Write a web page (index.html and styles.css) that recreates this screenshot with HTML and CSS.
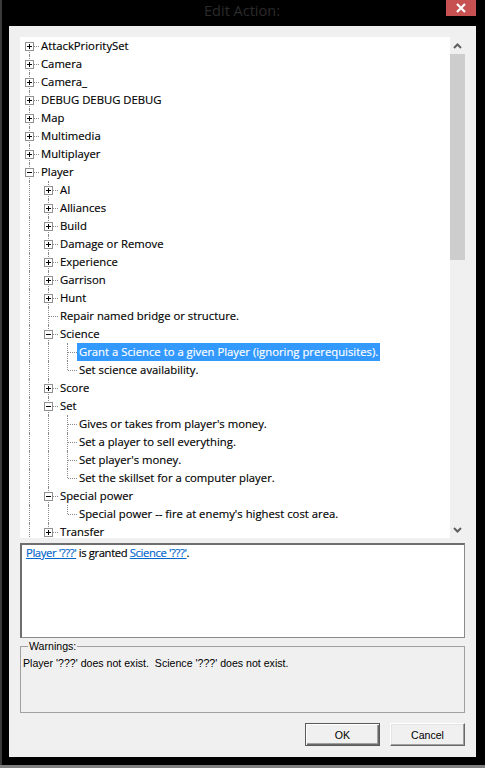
FILE: index.html
```html
<!DOCTYPE html>
<html>
<head>
<meta charset="utf-8">
<title>Edit Action</title>
<link rel="stylesheet" href="styles.css">
</head>
<body>
<div class="screen">
  <div class="edge"></div>
  <div class="window">
    <div class="titlebar">
      <div class="title">Edit Action:</div>
      <div class="close">
        <svg width="12" height="10" viewBox="0 0 12 10"><path d="M2 1 L10 9 M10 1 L2 9" stroke="#fff" stroke-width="2.2" fill="none"/></svg>
      </div>
    </div>
    <div class="client">
      <div class="tree">
        <div class="list">
          <div class="row"><span class="c first more"><span class="box plus"></span></span><span class="label">AttackPrioritySet</span></div>
          <div class="row"><span class="c more"><span class="box plus"></span></span><span class="label">Camera</span></div>
          <div class="row"><span class="c more"><span class="box plus"></span></span><span class="label">Camera_</span></div>
          <div class="row"><span class="c more"><span class="box plus"></span></span><span class="label">DEBUG DEBUG DEBUG</span></div>
          <div class="row"><span class="c more"><span class="box plus"></span></span><span class="label">Map</span></div>
          <div class="row"><span class="c more"><span class="box plus"></span></span><span class="label">Multimedia</span></div>
          <div class="row"><span class="c more"><span class="box plus"></span></span><span class="label">Multiplayer</span></div>
          <div class="row"><span class="c more"><span class="box minus"></span></span><span class="label">Player</span></div>
          <div class="row"><span class="g"></span><span class="c more"><span class="box plus"></span></span><span class="label">AI</span></div>
          <div class="row"><span class="g"></span><span class="c more"><span class="box plus"></span></span><span class="label">Alliances</span></div>
          <div class="row"><span class="g"></span><span class="c more"><span class="box plus"></span></span><span class="label">Build</span></div>
          <div class="row"><span class="g"></span><span class="c more"><span class="box plus"></span></span><span class="label">Damage or Remove</span></div>
          <div class="row"><span class="g"></span><span class="c more"><span class="box plus"></span></span><span class="label">Experience</span></div>
          <div class="row"><span class="g"></span><span class="c more"><span class="box plus"></span></span><span class="label">Garrison</span></div>
          <div class="row"><span class="g"></span><span class="c more"><span class="box plus"></span></span><span class="label">Hunt</span></div>
          <div class="row"><span class="g"></span><span class="c more"></span><span class="label">Repair named bridge or structure.</span></div>
          <div class="row"><span class="g"></span><span class="c more"><span class="box minus"></span></span><span class="label">Science</span></div>
          <div class="row"><span class="g"></span><span class="g"></span><span class="c more"></span><span class="label selected">Grant a Science to a given Player (ignoring prerequisites).</span></div>
          <div class="row"><span class="g"></span><span class="g"></span><span class="c"></span><span class="label">Set science availability.</span></div>
          <div class="row"><span class="g"></span><span class="c more"><span class="box plus"></span></span><span class="label">Score</span></div>
          <div class="row"><span class="g"></span><span class="c more"><span class="box minus"></span></span><span class="label">Set</span></div>
          <div class="row"><span class="g"></span><span class="g"></span><span class="c more"></span><span class="label">Gives or takes from player's money.</span></div>
          <div class="row"><span class="g"></span><span class="g"></span><span class="c more"></span><span class="label">Set a player to sell everything.</span></div>
          <div class="row"><span class="g"></span><span class="g"></span><span class="c more"></span><span class="label">Set player's money.</span></div>
          <div class="row"><span class="g"></span><span class="g"></span><span class="c"></span><span class="label">Set the skillset for a computer player.</span></div>
          <div class="row"><span class="g"></span><span class="c more"><span class="box minus"></span></span><span class="label">Special power</span></div>
          <div class="row"><span class="g"></span><span class="g"></span><span class="c"></span><span class="label">Special power -- fire at enemy's highest cost area.</span></div>
          <div class="row"><span class="g"></span><span class="c more"><span class="box plus"></span></span><span class="label">Transfer</span></div>
        </div>
        <div class="sb">
          <div class="sb-btn">
            <svg width="9" height="6" viewBox="0 0 9 6"><path d="M1 5 L4.5 1.5 L8 5" stroke="#606060" stroke-width="2" fill="none"/></svg>
          </div>
          <div class="thumb"></div>
          <div class="track"></div>
          <div class="sb-btn">
            <svg width="9" height="6" viewBox="0 0 9 6"><path d="M1 1 L4.5 4.5 L8 1" stroke="#606060" stroke-width="2" fill="none"/></svg>
          </div>
        </div>
      </div>
      <div class="desc"><a class="link">Player '???'</a> is granted <a class="link">Science '???'</a>.</div>
      <fieldset class="warn">
        <legend>Warnings:</legend>
        <div class="warn-text">Player '???' does not exist.&nbsp; Science '???' does not exist.</div>
      </fieldset>
      <div class="buttons">
        <div class="btn default">OK</div>
        <div class="btn">Cancel</div>
      </div>
    </div>
  </div>
</div>
</body>
</html>
```
FILE: styles.css
```css
html, body {
  margin: 0;
  padding: 0;
}
body {
  width: 485px;
  height: 768px;
  overflow: hidden;
  background: #7f7f7f;
  font-family: "Open Sans", "Noto Sans", sans-serif;
}
.screen {
  display: flex;
  height: 765px;
}
.edge {
  width: 2px;
  background: #3a3a3a;
}
.window {
  flex: 1;
  background: #000;
  display: flex;
  flex-direction: column;
}
.titlebar {
  position: relative;
  height: 26px;
  display: flex;
  justify-content: center;
  padding-right: 3px;
}
.title {
  font-family: "Open Sans", sans-serif;
  font-size: 14.5px;
  line-height: 22px;
  color: #2b2b2b;
}
.close {
  position: absolute;
  top: 0;
  right: 9px;
  width: 30px;
  height: 16px;
  background: #c75050;
  display: flex;
  align-items: center;
  justify-content: center;
}
.client {
  height: 731px;
  box-sizing: border-box;
  margin: 0 9px 0 7px;
  background: #f0f0f0;
  padding: 11px 11px 0 11px;
  display: flex;
  flex-direction: column;
}
.tree {
  height: 501px;
  display: flex;
  flex: none;
}
.list {
  width: 430px;
  background: #fff;
  overflow: hidden;
}
.row {
  display: flex;
  height: 18px;
  font-size: 11.3px;
  line-height: 18px;
  color: #000;
  white-space: nowrap;
}
.g, .c {
  position: relative;
  width: 19px;
  height: 18px;
  flex: none;
}
.g::before {
  content: "";
  position: absolute;
  left: 9px;
  top: 0;
  height: 18px;
  border-left: 1px dotted #8a8a8a;
}
.c::before {
  content: "";
  position: absolute;
  left: 9px;
  top: 0;
  height: 9px;
  border-left: 1px dotted #8a8a8a;
}
.c.more::before {
  height: 18px;
}
.c.first::before {
  top: 9px;
  height: 9px;
}
.c::after {
  content: "";
  position: absolute;
  left: 10px;
  top: 9px;
  width: 9px;
  border-top: 1px dotted #8a8a8a;
}
.box {
  position: absolute;
  z-index: 1;
  left: 5px;
  top: 5px;
  width: 9px;
  height: 9px;
  box-sizing: border-box;
  border: 1px solid #919191;
  background: #fff;
}
.box::before {
  content: "";
  position: absolute;
  left: 1px;
  top: 3px;
  width: 5px;
  height: 1px;
  background: #000;
}
.box.plus::after {
  content: "";
  position: absolute;
  left: 3px;
  top: 1px;
  width: 1px;
  height: 5px;
  background: #000;
}
.label {
  padding: 0 2px;
  height: 18px;
  -webkit-text-stroke: 0.15px currentColor;
}
.label.selected {
  background: #3399ff;
  color: #fff;
}
.sb {
  width: 15px;
  display: flex;
  flex-direction: column;
  background: #f0f0f0;
}
.sb-btn {
  height: 17px;
  flex: none;
  display: flex;
  align-items: center;
  justify-content: center;
}
.thumb {
  height: 206px;
  flex: none;
  background: #cdcdcd;
}
.track {
  flex: 1;
}
.desc {
  margin-top: 5px;
  height: 95px;
  flex: none;
  box-sizing: border-box;
  background: #fff;
  border-top: 2px solid #6e6e6e;
  border-left: 2px solid #6e6e6e;
  border-right: 1px solid #8a8a8a;
  border-bottom: 1px solid #8a8a8a;
  padding: 0 4px;
  font-size: 11.3px;
  line-height: 16px;
  letter-spacing: -0.4px;
  color: #000;
  -webkit-text-stroke: 0.15px currentColor;
}
.link {
  color: #0066cc;
  text-decoration: underline;
}
.warn {
  margin: 2px 0 0 0;
  padding: 0 2px;
  height: 73px;
  box-sizing: border-box;
  flex: none;
  border: 1px solid #a0a0a0;
  min-width: 0;
  font-family: "Liberation Sans", Arial, sans-serif;
  font-size: 10.6px;
  line-height: 13px;
  color: #000;
}
.warn legend {
  margin-left: 5px;
  padding: 0 1px;
  font-size: 10.6px;
  line-height: 13px;
}
.warn-text {
  margin-top: 4px;
  white-space: nowrap;
}
.buttons {
  margin-top: 10px;
  display: flex;
  justify-content: flex-end;
  gap: 10px;
}
.btn {
  width: 75px;
  height: 23px;
  box-sizing: border-box;
  display: flex;
  align-items: center;
  justify-content: center;
  font-family: "Liberation Sans", Arial, sans-serif;
  font-size: 10.6px;
  color: #000;
  background: #f0f0f0;
  border-top: 1px solid #fff;
  border-left: 1px solid #fff;
  border-right: 1px solid #696969;
  border-bottom: 1px solid #696969;
  box-shadow: inset -1px -1px 0 #a0a0a0, inset 1px 1px 0 #e3e3e3;
}
.btn.default {
  border: 1px solid #5a5a5a;
  box-shadow: inset 1px 1px 0 #fff, inset -1px -1px 0 #696969, inset -2px -2px 0 #a0a0a0;
}
```
